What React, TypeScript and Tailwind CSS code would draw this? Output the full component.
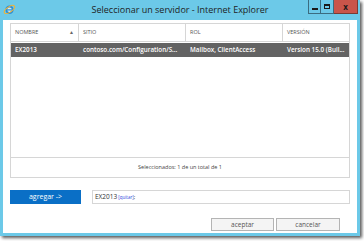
import React from 'react'

const FONT = { fontFamily: '"Open Sans", "Noto Sans", "Liberation Sans", sans-serif' }

// columnas de la lista: ancho en px y texto
const COLUMNS = [
  { label: 'NOMBRE', width: 'w-[68px]', sort: true },
  { label: 'SITIO', width: 'w-[107px]' },
  { label: 'ROL', width: 'w-[97px]' },
  { label: 'VERSIÓN', width: 'flex-1' },
]

const ROW = ['EX2013', 'contoso.com/Configuration/S...', 'Mailbox, ClientAccess', 'Version 15.0 (Buil...']

function IeLogo() {
  return (
    <svg width="13" height="13" viewBox="0 0 13 13">
      <circle cx="6.5" cy="6.8" r="4.2" fill="#2a8fd8" />
      <circle cx="6.5" cy="6.8" r="2.3" fill="#cfeaf8" />
      <rect x="3.5" y="6.3" width="6" height="1.2" fill="#2a8fd8" />
      <ellipse cx="6.5" cy="6.5" rx="6" ry="2.6" fill="none" stroke="#f2b233" strokeWidth="1.1" transform="rotate(-35 6.5 6.5)" />
    </svg>
  )
}

function TitleBar() {
  return (
    <div className="relative flex h-[20px] items-center justify-center">
      <div className="absolute left-[3px] top-[3px]">
        <IeLogo />
      </div>
      <span className="text-[9px] text-[#1e1e1e]" style={FONT}>
        Seleccionar un servidor - Internet Explorer
      </span>
      <div className="absolute right-[2px] top-0 flex h-[14px]">
        <div className="flex w-[13px] items-end justify-center border border-t-0 border-[#3b6c80] bg-[#6cc9e8] pb-[3px]">
          <div className="h-[2px] w-[6px] bg-[#1a1a1a]" />
        </div>
        <div className="flex w-[13px] items-center justify-center border border-l-0 border-t-0 border-[#3b6c80] bg-[#6cc9e8]">
          <div className="h-[5px] w-[6px] border-[1.5px] border-t-2 border-[#1a1a1a]" />
        </div>
        <div className="flex w-[24px] items-center justify-center border border-l-0 border-t-0 border-[#7a3b33] bg-[#c9554a] text-[8px] font-bold leading-none text-[#1a1a1a]" style={FONT}>
          x
        </div>
      </div>
    </div>
  )
}

function ServerList() {
  return (
    <div className="flex h-[155px] flex-col border border-[#d6d6d6]" style={FONT}>
      <div className="flex h-[18px] border-b border-[#d6d6d6]">
        {COLUMNS.map((c, i) => (
          <div
            key={c.label}
            className={`${c.width} flex items-center justify-between pl-[4px] pr-[4px] text-[5.5px] text-[#555] ${i < COLUMNS.length - 1 ? 'border-r border-[#d6d6d6]' : ''}`}
          >
            <span>{c.label}</span>
            {c.sort && <span className="text-[5px] text-[#666]">▲</span>}
          </div>
        ))}
      </div>
      <div className="mt-[1px] flex h-[14px] bg-[#636363] text-[6.3px] font-semibold text-white">
        {COLUMNS.map((c, i) => (
          <div key={c.label} className={`${c.width} flex items-center overflow-hidden pl-[4px] whitespace-nowrap`}>
            {ROW[i]}
          </div>
        ))}
      </div>
      <div className="flex-1" />
      <div className="flex h-[20px] items-center justify-center border-t border-[#d6d6d6] text-[5.5px] text-[#444]">
        Seleccionados: 1 de un total de 1
      </div>
    </div>
  )
}

export default function App() {
  return (
    <div className="h-[241px] w-[364px] bg-white">
      <div className="flex h-[236px] w-[360px] flex-col bg-[#6cc9e8] shadow-[2px_2px_3px_rgba(0,0,0,0.65)]">
        <TitleBar />
        <div className="mx-[3px] mb-[3px] flex flex-1 flex-col bg-white px-[7px] pt-[3px]">
          <ServerList />
          <div className="mt-[12px] flex h-[14px] gap-[11px]" style={FONT}>
            <div className="flex w-[71px] items-center justify-center bg-[#0a6fc6] text-[7px] text-white">
              agregar -&gt;
            </div>
            <div className="flex flex-1 items-center border border-[#d6d6d6] pl-[2px] text-[6.5px] text-[#333]">
              EX2013
              <span className="ml-[1px] text-[4.5px] text-[#2c3fe0]">[quitar]</span>
              <span className="text-[6px]">;</span>
            </div>
          </div>
          <div className="mt-[14px] flex justify-end gap-[2px] pr-[10px]" style={FONT}>
            <div className="flex h-[13px] w-[63px] items-center justify-center border border-[#b4b4b4] bg-[#f4f4f4] text-[6.5px] text-[#555]">
              aceptar
            </div>
            <div className="flex h-[13px] w-[64px] items-center justify-center border border-[#b4b4b4] bg-[#f4f4f4] text-[6.5px] text-[#555]">
              cancelar
            </div>
          </div>
        </div>
      </div>
    </div>
  )
}
